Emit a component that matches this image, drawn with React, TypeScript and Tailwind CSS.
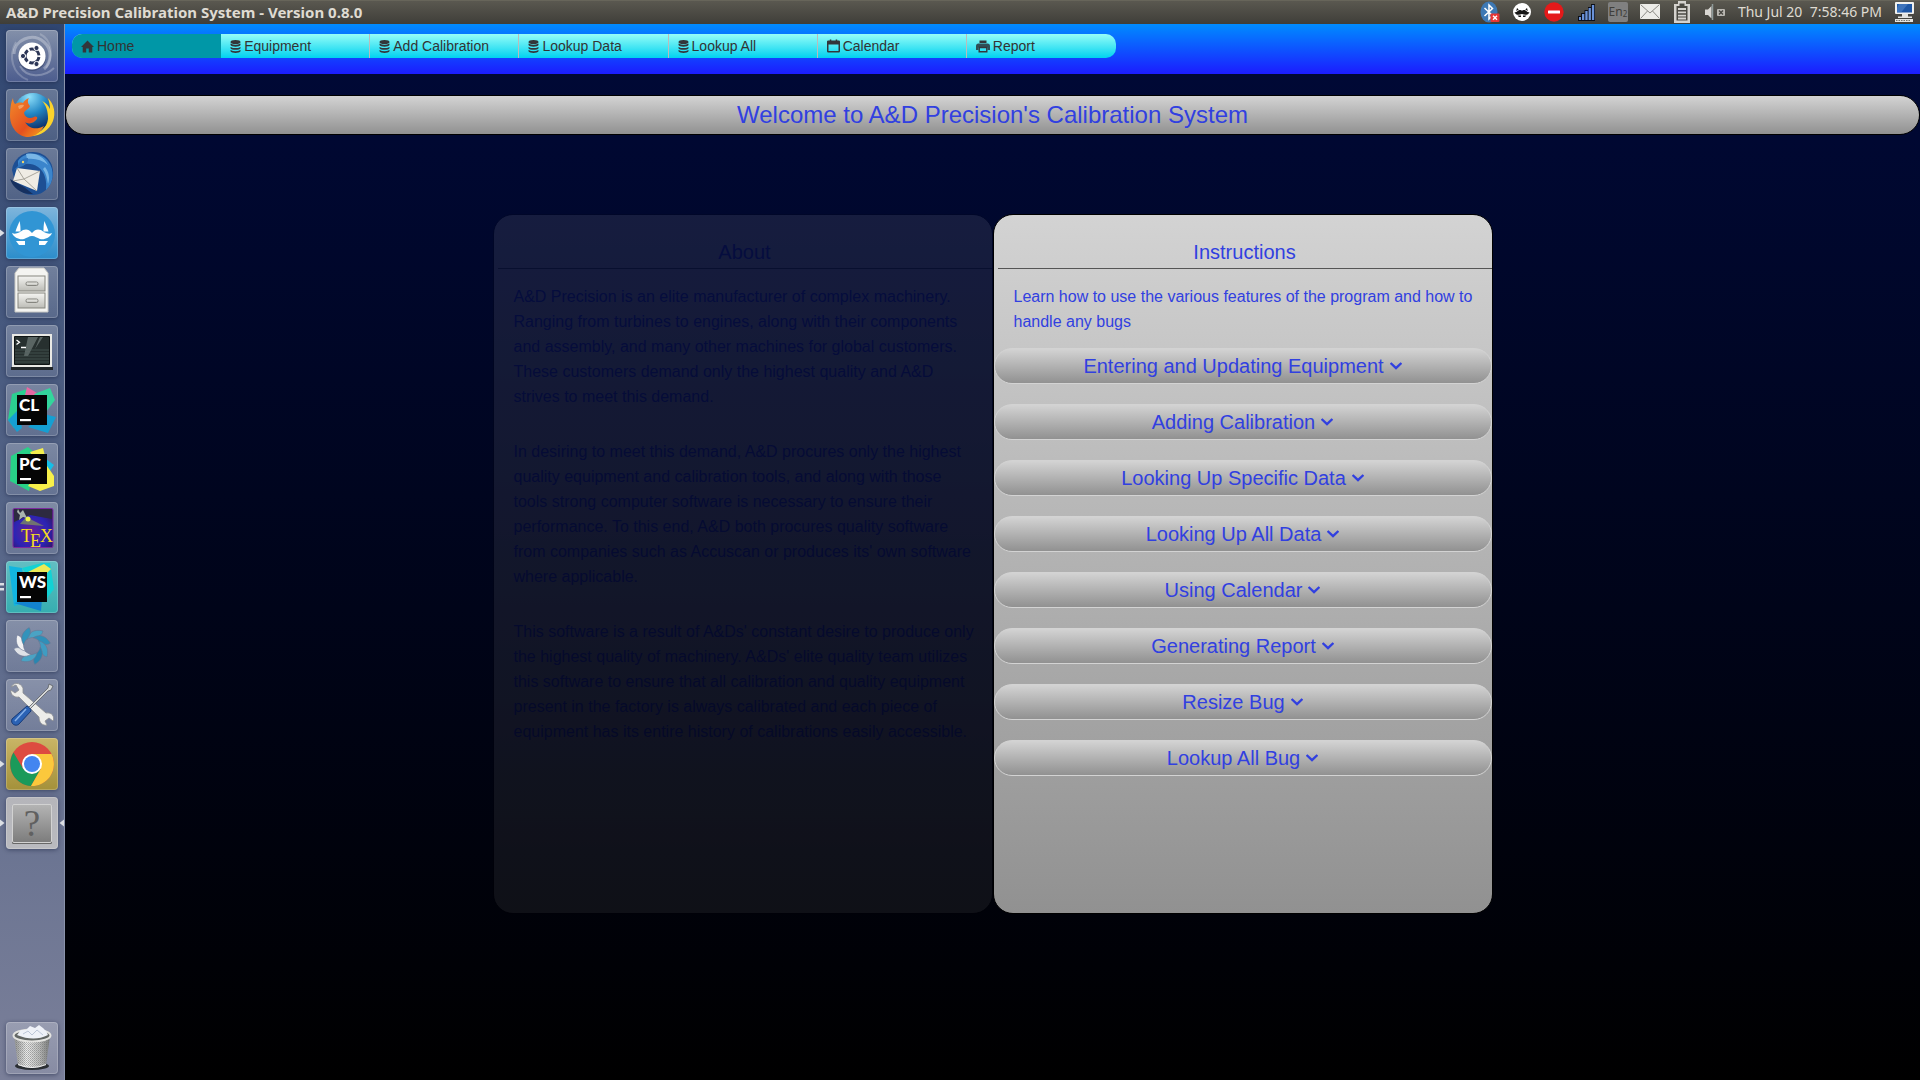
import React, { useState } from "react";

const DatabaseIcon = () => (
  <svg width="11" height="13" viewBox="0 0 11 13" fill="#33363a" aria-hidden="true">
    <ellipse cx="5.5" cy="2" rx="5" ry="2" />
    <path d="M.5 3.600q5 2.400 10 0v1.400c-.8 2.200-9.200 2.200-10 0z" />
    <path d="M.5 6.900q5 2.400 10 0v1.300c-.8 2.200-9.200 2.200-10 0z" />
    <path d="M.5 10q5 2.400 10 0v1.200c-.8 2.300-9.200 2.300-10 0z" />
  </svg>
);

const HomeIcon = () => (
  <svg width="13" height="13" viewBox="0 0 13 13" fill="#33363a" aria-hidden="true">
    <path d="M6.500.500 13 7H11.300V12.500H7.800V8.500H5.200V12.500H1.700V7H0z" />
  </svg>
);

const CalendarIcon = () => (
  <svg width="13" height="14" viewBox="0 0 13 14" aria-hidden="true">
    <rect x=".75" y="2.250" width="11.500" height="10.500" rx=".5" fill="none" stroke="#33363a" strokeWidth="1.500" />
    <path d="M.5 2h12v3.500H.5zM2.800.500h1.500V3H2.800zM8.700.500h1.500V3H8.700z" fill="#33363a" />
  </svg>
);

const PrinterIcon = () => (
  <svg width="14" height="13" viewBox="0 0 14 13" aria-hidden="true">
    <path d="M3.500.500h7V3h-7z" fill="#33363a" />
    <path d="M0 6q0-2.500 2.500-2.500h9Q14 3.500 14 6v4H11.500V7.500h-9V10H0z" fill="#2f4f57" />
    <path d="M3.200 7.500h7.600v4.300H3.200z" fill="none" stroke="#33363a" strokeWidth="1.400" />
  </svg>
);

const ChevronDown = () => (
  <svg width="12" height="8" viewBox="0 0 12 8" fill="none" stroke="currentColor" strokeWidth="2.400" aria-hidden="true">
    <path d="M.6 1 6 6.200 11.400 1" />
  </svg>
);

const navItems = [
  { label: "Home", icon: <HomeIcon /> },
  { label: "Equipment", icon: <DatabaseIcon /> },
  { label: "Add Calibration", icon: <DatabaseIcon /> },
  { label: "Lookup Data", icon: <DatabaseIcon /> },
  { label: "Lookup All", icon: <DatabaseIcon /> },
  { label: "Calendar", icon: <CalendarIcon /> },
  { label: "Report", icon: <PrinterIcon /> },
];

const topics = [
  "Entering and Updating Equipment",
  "Adding Calibration",
  "Looking Up Specific Data",
  "Looking Up All Data",
  "Using Calendar",
  "Generating Report",
  "Resize Bug",
  "Lookup All Bug",
];

const about = [
  "A&D Precision is an elite manufacturer of complex machinery. Ranging from turbines to engines, along with their components and assembly, and many other machines for global customers. These customers demand only the highest quality and A&D strives to meet this demand.",
  "In desiring to meet this demand, A&D procures only the highest quality equipment and calibration tools, and along with those tools strong computer software is necessary to ensure their performance. To this end, A&D both procures quality software from companies such as Accuscan or produces its' own software where applicable.",
  "This software is a result of A&Ds' constant desire to produce only the highest quality of machinery. A&Ds' elite quality team utilizes this software to ensure that all calibration and quality equipment present in the factory is always calibrated and each piece of equipment has its entire history of calibrations easily accessible.",
];

const Art = ({ children }: { children: React.ReactNode }) => (
  <svg className="size-full" viewBox="0 0 52 52" aria-hidden="true">
    {children}
  </svg>
);

const UbuntuArt = () => (
  <Art>
    <g fill="none" stroke="#fff">
      <path d="M8 24C8 10 26 2 38 12c8 7 8 20 0 27" strokeOpacity=".3" strokeWidth="3" />
      <path d="M10 12C2 26 6 44 22 50" strokeOpacity=".2" strokeWidth="2" />
      <path d="M14 36c6 12 24 12 34 2" strokeOpacity=".25" strokeWidth="2" />
      <path d="M34 4c12 6 14 22 6 34" strokeOpacity=".2" strokeWidth="2" />
    </g>
    <circle cx="26" cy="27" r="14" fill="#1c2747" opacity=".35" />
    <circle cx="26" cy="26" r="13.600" fill="#fff" />
    <circle cx="26" cy="26" r="7" fill="none" stroke="#2c3656" strokeWidth="3" strokeDasharray="12.660 2" strokeDashoffset="-1" />
    <g fill="#2c3656" stroke="#fff">
      <circle cx="17" cy="26" r="2.600" />
      <circle cx="30.500" cy="18" r="2.600" />
      <circle cx="30.500" cy="34" r="2.600" />
    </g>
  </Art>
);

const FirefoxArt = () => (
  <Art>
    <defs>
      <radialGradient id="globe" cx=".4" cy=".1" r=".9">
        <stop offset="0" stopColor="#8fe0fa" />
        <stop offset=".5" stopColor="#2387c4" />
        <stop offset="1" stopColor="#0c2c66" />
      </radialGradient>
      <linearGradient id="fox" x1="0" y1="0" x2="1" y2="1">
        <stop offset="0" stopColor="#f28a2a" />
        <stop offset=".6" stopColor="#e4501f" />
        <stop offset="1" stopColor="#f6a51c" />
      </linearGradient>
    </defs>
    <circle cx="27" cy="23" r="19" fill="url(#globe)" />
    <path d="M42 9c6 6 8 15 5 23-4 10-14 16-24 15 10-2 18-8 19-17 0-8-2-14-6-18 4 2 6 4 8 8 0-4-1-8-2-11z" fill="#fbd22c" />
    <path d="M7 9c0 3 1 5 2 6 2-1 5-2 8-1 1-2 3-4 6-5-2 3-1 6 1 8-1 3-5 4-6 7 1 5 6 6 10 4 2-1 4 0 3 2-3 4-8 6-12 3 4 7 12 8 19 4-4 7-10 11-16 11C12 48 4 38 4 27 4 20 5 13 7 9z" fill="url(#fox)" />
    <path d="M12 17q4-2 6-1-1 3-5 4z" fill="#fbc08a" opacity=".6" />
  </Art>
);

const ThunderbirdArt = () => (
  <Art>
    <path d="M6 22C7 12 16 4 27 4c13 0 21 11 20 23-1 11-9 20-20 20-7 0-13-3-17-9z" fill="#1d4f94" />
    <path d="M12 13C18 4 34 3 42 13c7 9 6 22-2 29 1-9-1-18-8-23-6-4-13-4-20-1z" fill="#3b85cc" />
    <path d="M20 6c9-2 18 3 22 11-6-5-13-7-21-6zM39 19c4 5 5 11 3 17-1-6-2-11-5-15z" fill="#79b6e6" />
    <path d="m11 20 23 3-3 20L7 33z" fill="#efece4" />
    <path d="m11 20 7 11 16-8M7 33l11-2 13 12" fill="none" stroke="#a9a69c" />
    <path d="M4 31c3 9 12 16 23 15l-9-7z" fill="#16305f" />
    <path d="m12 18c1-5 5-8 10-8 1 4-3 8-8 9l-6 3z" fill="#2f74bd" />
    <circle cx="17" cy="14" r="1.200" fill="#f0d46c" />
  </Art>
);

const MustacheArt = () => (
  <Art>
    <circle cx="26" cy="27" r="23" fill="#3195d4" />
    <path d="M6 26c4 2 8-1 11-3 3-1 6-1 9 3 3-4 6-4 9-3 3 2 7 5 11 3-2 5-8 7-12 6-3-1-5-3-8-3s-5 2-8 3c-4 1-10-1-12-6z" fill="#fff" />
    <path d="M13.500 14c-1 3-3 7-4 10.500l5 0c0-3 0-7-1-10.500zM38.500 14c1 3 3 7 4 10.500l-5 0c0-3 0-7 1-10.500zM10 34h9V38h-6zM42 34h-9V38h6z" fill="#fff" />
  </Art>
);

const CabinetArt = () => (
  <Art>
    <defs>
      <linearGradient id="metal" x1="0" y1="0" x2="0" y2="1">
        <stop offset="0" stopColor="#f5f5f2" />
        <stop offset="1" stopColor="#bcbcb6" />
      </linearGradient>
    </defs>
    <path d="M13 2h25l4 5v39H9V7z" fill="#f4f4f1" stroke="#c9c9c4" />
    <g fill="url(#metal)" stroke="#85857f">
      <rect x="12" y="10" width="27" height="15" />
      <rect x="12" y="27" width="27" height="15" />
      <rect x="20" y="16" width="12" height="3.500" rx="1.500" />
      <rect x="20" y="33" width="12" height="3.500" rx="1.500" />
    </g>
  </Art>
);

const TerminalArt = () => (
  <Art>
    <path d="M6 9h40v34H6z" fill="#e9e9e5" />
    <path d="M5 42h42v3H5z" fill="#22272a" />
    <path d="M8.500 11.500h35v28h-35z" fill="#27302f" stroke="#0f1414" />
    <path d="M22 12h10L22 31h-4zM34 12h3l-8 12z" fill="#7d8887" opacity=".6" />
    <path d="M9 25h34M9 28h34M9 31h34M9 34h34M9 37h34" stroke="#516361" opacity=".6" />
    <path d="m10.500 15 3 2.200-3 2.200M15 22.500h5" fill="none" stroke="#fff" strokeWidth="1.300" />
  </Art>
);

const JetBrainsArt = ({ text, children }: { text: string; children: React.ReactNode }) => (
  <Art>
    {children}
    <rect x="11" y="11" width="30" height="30" fill="#050505" />
    <text x="13" y="27" fill="#fff" fontSize="17" fontWeight="900" fontFamily="Lato, sans-serif">
      {text}
    </text>
    <rect x="14" y="35" width="11" height="2.200" fill="#fff" />
  </Art>
);

const TexArt = () => (
  <Art>
    <defs>
      <radialGradient id="tex" cx=".45" cy=".6" r=".7">
        <stop offset="0" stopColor="#6a1f94" />
        <stop offset=".6" stopColor="#2b24b4" />
        <stop offset="1" stopColor="#35145c" />
      </radialGradient>
    </defs>
    <rect x="7" y="6.500" width="40" height="39" rx="1.500" fill="url(#tex)" stroke="#7c2aa0" />
    <path d="M8 7h38v10L24 13 8 20z" fill="#2d2a40" />
    <path d="m20 15 18 9-24-2z" fill="#9ac43c" opacity=".5" />
    <path d="m12 7 2 4 3-3 4 8-4-1-4 3 1-5-3-3z" fill="#a9b3ae" />
    <circle cx="22" cy="17" r="2.500" fill="#edf24a" />
    <g fill="#f5dc1e" fontFamily="Liberation Serif, serif" fontSize="18">
      <text x="15" y="40">T</text>
      <text x="24" y="45">E</text>
      <text x="34" y="40">X</text>
    </g>
  </Art>
);

const blades = [
  { angle: 0, fill: "#4aa3c4" },
  { angle: 45, fill: "#2f8fb8" },
  { angle: 90, fill: "#3f9cc2" },
  { angle: 135, fill: "#2a86b0" },
  { angle: 180, fill: "#4aa3c4" },
  { angle: 225, fill: "#dfe2e7" },
  { angle: 270, fill: "#f0f1f3" },
  { angle: 315, fill: "#3293bb" },
];

const SwirlArt = () => (
  <Art>
    {blades.map(({ angle, fill }) => (
      <path key={angle} d="M21 19.500C22 13 28 8.500 37 11c-1 4-4 6-9 6.500-3 0-5 .5-7 2z" transform={`rotate(${angle} 26 26)`} fill={fill} stroke="#6a7692" strokeWidth=".6" />
    ))}
  </Art>
);

const ToolsArt = () => (
  <Art>
    <path d="M5 8c3-5 9-5 12 1v5l23 20c6-1 9 4 7 8l-4-3-4 3 2 4c-4 1-8-2-8-8L13 18c-5 1-9-3-8-7l4 3 4-3-3-5z" fill="#ededea" stroke="#8c8e90" strokeWidth=".8" />
    <path d="m22 29 20-20 1-4 4 2-2 4-3 1-19 19z" fill="#d5d7d8" stroke="#5b5e62" strokeWidth=".8" />
    <path d="M21 27c2 1 4 3 4 5L13 45c-3 3-9 0-7-5z" fill="#2b62b4" stroke="#173a77" />
    <path d="M20 30 9 42" stroke="#86b0e8" strokeWidth="1.500" />
  </Art>
);

const ChromeArt = () => (
  <Art>
    <circle cx="26" cy="26" r="22" fill="#dd4b40" />
    <path d="m17.300 31 8.700 5 8.700-5L25 48A22 22 0 0 1 7.500 14.500z" fill="#1b9a5a" />
    <path d="M26 16h19.500A22 22 0 0 1 25 48l9.700-17z" fill="#fbc83c" />
    <circle cx="26" cy="26" r="10" fill="#fff" />
    <circle cx="26" cy="26" r="8" fill="#4385f0" />
  </Art>
);

const UnknownArt = () => (
  <Art>
    <defs>
      <linearGradient id="unknown" x1="0" y1="0" x2="0" y2="1">
        <stop offset="0" stopColor="#b4b4b4" />
        <stop offset="1" stopColor="#7c7c7c" />
      </linearGradient>
    </defs>
    <rect x="6" y="8" width="40" height="39" rx="1.500" fill="#686868" />
    <rect x="6.500" y="7.500" width="39" height="38" rx="1.500" fill="url(#unknown)" stroke="#d2d2d2" />
    <text x="26" y="39" textAnchor="middle" fill="#606060" fontSize="37" fontFamily="Liberation Serif, serif">
      ?
    </text>
  </Art>
);

const TrashArt = () => (
  <Art>
    <defs>
      <linearGradient id="bin" x1="0" y1="0" x2="1" y2="0">
        <stop offset="0" stopColor="#8f9190" />
        <stop offset=".35" stopColor="#ecedec" />
        <stop offset=".7" stopColor="#bcbdbc" />
        <stop offset="1" stopColor="#757776" />
      </linearGradient>
      <pattern id="mesh" width="2" height="2" patternUnits="userSpaceOnUse">
        <rect width="1" height="1" fill="#666" />
        <rect x="1" y="1" width="1" height="1" fill="#888" />
      </pattern>
    </defs>
    <ellipse cx="26" cy="44" rx="17" ry="4" fill="#2a2e33" />
    <path d="M8 14 12 43q14 6 28 0l4-29z" fill="url(#bin)" />
    <path d="M9 18 12 43q14 6 28 0l3-25z" fill="url(#mesh)" opacity=".5" />
    <ellipse cx="26" cy="13.500" rx="18.500" ry="6" fill="#626664" stroke="#e3e3e0" strokeWidth="2" />
    <path d="m11 13 4-5 5 0 4-4 5 2 4-3 4 3 3 3 2 4q-14 7-31 0z" fill="#eef1f8" />
    <path d="m17 12 5-3 4 4 5-5 6 5" fill="none" stroke="#bcc6d8" />
    <path d="M12 42.500q14 6 28 0" fill="none" stroke="#eee" />
  </Art>
);

const plain = "from-white/25 to-white/10";

const launcher = [
  { name: "Search your computer", tile: "from-white/40 to-[#5c69a0]/60", art: <UbuntuArt /> },
  { name: "Firefox", tile: plain, art: <FirefoxArt /> },
  { name: "Thunderbird", tile: plain, art: <ThunderbirdArt /> },
  { name: "Franz", tile: "from-[#7fb5dc] to-[#2b8dcb]", art: <MustacheArt />, left: "arrow" },
  { name: "Files", tile: plain, art: <CabinetArt /> },
  { name: "Terminal", tile: plain, art: <TerminalArt /> },
  {
    name: "CLion",
    tile: plain,
    art: (
      <JetBrainsArt text="CL">
        <path d="M6 10 21 5l4 12L8 44 2 36z" fill="#2bcf90" />
        <path d="m21 3 10 6 2 6H18z" fill="#e567a2" />
        <path d="m28 10 16-6 5 12-9 12z" fill="#33d59c" />
        <path d="M2 36 12 26l4 18-5 4zM38 30l12 3-8 16-20-6z" fill="#159fd2" />
      </JetBrainsArt>
    ),
  },
  {
    name: "PyCharm",
    tile: plain,
    art: (
      <JetBrainsArt text="PC">
        <path d="M5 13 22 4l9 8-8 36L4 38z" fill="#28d287" />
        <path d="m24 9 13-4 3 12-8 6z" fill="#f4ee4e" />
        <path d="m36 13 12 9-6 9z" fill="#16bfe8" />
        <path d="m39 20 9 13v10l-14 5-12-5z" fill="#f8f04a" />
      </JetBrainsArt>
    ),
  },
  { name: "TeX editor", tile: plain, art: <TexArt /> },
  {
    name: "WebStorm",
    tile: "from-[#62bfc3] to-[#36aeb0]",
    left: "bars",
    art: (
      <JetBrainsArt text="WS">
        <path d="M3 5 16 7l6 34-14 4z" fill="#12b5e0" />
        <path d="m8 42 28-4-1 12z" fill="#1383d0" />
        <path d="m16 7 20-5 8 0 4 26-9 12z" fill="#12d2d4" />
        <path d="m22 11 16-8 7 5-8 8z" fill="#ecea55" />
      </JetBrainsArt>
    ),
  },
  { name: "Shutter", tile: plain, art: <SwirlArt /> },
  { name: "System settings", tile: plain, art: <ToolsArt /> },
  { name: "Chrome", tile: "from-[#c9b566] to-[#a4913a]", art: <ChromeArt />, left: "arrow" },
  { name: "Unknown application", tile: "from-[#b5b5ba] to-[#b9babf]", art: <UnknownArt />, left: "arrow", right: true },
];

type Tile = { name: string; tile: string; art: React.ReactNode; left?: string; right?: boolean };

const LauncherTile = ({ name, tile, art, left, right }: Tile) => (
  <li className="relative flex justify-center">
    {left === "arrow" && (
      <svg className="absolute top-5 left-0" width="5" height="12" viewBox="0 0 5 12" aria-hidden="true">
        <path d="M0 2.500 4.500 6 0 9.500z" fill="#dcdfe4" />
      </svg>
    )}
    {left === "bars" && (
      <svg className="absolute top-5 left-0" width="5" height="12" viewBox="0 0 5 12" aria-hidden="true">
        <path d="M0 2h4v2.500H0zM0 7h4v2.500H0z" fill="#dcdfe4" />
      </svg>
    )}
    {right && (
      <svg className="absolute top-5 right-0" width="5" height="12" viewBox="0 0 5 12" aria-hidden="true">
        <path d="M5 2.500.5 6 5 9.500z" fill="#dcdfe4" />
      </svg>
    )}
    <button
      aria-label={name}
      className={`size-[52px] overflow-hidden rounded-[4px] bg-linear-to-b/srgb shadow-[0_1px_4px_rgba(20,30,60,0.5)] ring-1 ring-white/20 ring-inset ${tile}`}
    >
      {art}
    </button>
  </li>
);

const Tray = () => (
  <div className="flex items-center gap-3">
    <svg width="20" height="22" viewBox="0 0 20 22" aria-label="Bluetooth">
      <ellipse cx="9" cy="11" rx="8.500" ry="10.500" fill="#3d78b4" />
      <path d="m4.500 7 8 7.500L9 18V4l3.500 3.500-8 7.500" fill="none" stroke="#fff" strokeWidth="1.500" />
      <rect x="10.500" y="12.500" width="9" height="8.500" rx="1" fill="#e63535" />
      <path d="m13 14.800 4 4m0-4-4 4" stroke="#fff" strokeWidth="1.400" />
    </svg>
    <svg width="20" height="20" viewBox="0 0 20 20" aria-label="Franz">
      <circle cx="10" cy="10" r="9" fill="#fff" />
      <path d="M2.500 10c2 1 3-1.500 5-2 1-.2 2 0 2.500.8.500-.8 1.500-1 2.500-.8 2 .5 3 3 5 2-1 3-4 3.500-7.500 2-3.500 1.500-6.500 1-7.500-2zM5 6l-.8 3 2.500-1.500zM15 6l.8 3-2.500-1.500zM5.500 13.500h3.500v1.500H7zM14.500 13.500H11v1.500h2z" fill="#151515" />
    </svg>
    <svg width="20" height="20" viewBox="0 0 20 20" aria-label="Do not disturb">
      <circle cx="10" cy="10" r="9.700" fill="#e41a1a" />
      <rect x="4" y="8.500" width="12" height="3" rx=".5" fill="#fff" />
    </svg>
    <svg width="20" height="20" viewBox="0 0 20 20" aria-label="Network signal">
      <rect x="2" y="14" width="17" height="5" fill="#0c0f18" />
      <path d="M5 11h14v8H5zM8.500 8H19v11H8.500zM12 5h7v14h-7zM15 2h4v17h-4z" fill="#0c0f18" />
      <path d="M3 15h2v3H3zM6 12h2.300v6H6zM9.300 9h2.300v9H9.300zM12.600 6h2.300v12h-2.300zM15.900 3h2.300v15h-2.300z" fill="#6a92d8" />
    </svg>
    <span className="flex h-5 w-5 items-center justify-center rounded-[2px] bg-[#808080] text-xs leading-none text-[#3f3e3a]">
      En<span className="pt-1 text-[8px]">2</span>
    </span>
    <svg width="20" height="16" viewBox="0 0 20 16" aria-label="Messages">
      <rect width="20" height="15" rx="1" fill="#ecebe7" />
      <path d="m1 1 9 8 9-8M1 14l6.500-7M19 14l-6.500-7" fill="none" stroke="#8a8984" />
    </svg>
    <svg width="20" height="22" viewBox="0 0 20 22" aria-label="Battery">
      <path d="M6 0h8v3h4v19H2V3h4z" fill="#d4d2ce" />
      <path d="M7.500 2.500h5v2.500h3v14.500h-11V5h3z" fill="#4a4943" />
      <path d="M6 8h8M6 11.300h8M6 14.600h8M6 17.500h8" stroke="#d4d2ce" strokeWidth="1.800" />
    </svg>
    <svg width="22" height="18" viewBox="0 0 22 18" aria-label="Sound muted">
      <path d="M1 6.500h3V12H1zM4 6.500 7.500 3v12.500L4 12z" fill="#d8d6d2" />
      <path d="M8.500 1v16" stroke="#8f9a99" strokeWidth="1.500" />
      <rect x="13" y="6" width="8" height="7" rx="1" fill="#b9b7b1" />
      <path d="m15 7.500 4 4m0-4-4 4" stroke="#45443f" strokeWidth="1.400" />
    </svg>
    <time className="text-sm leading-5 whitespace-pre text-[#dfdbd2]">Thu Jul 20  7:58:46 PM</time>
    <svg width="22" height="22" viewBox="0 0 22 22" aria-label="Session">
      <rect x="1" y="1" width="19" height="12" rx="1" fill="#f1f1ee" />
      <rect x="3" y="3" width="15" height="8.500" fill="#1e57a5" />
      <path d="m5 3 9 0-7 8.500H3V7z" fill="#5c90d2" opacity=".5" />
      <path d="M8 13h6v2.500h4v1.500H4v-1.500h4zM1 18h18v3H1z" fill="#e4e4e0" />
      <path d="M2 19.500h14" stroke="#77776f" strokeDasharray="1.500 1" />
    </svg>
  </div>
);

export default function App() {
  const [page, setPage] = useState("Home");
  return (
    <div className="flex min-h-screen flex-col bg-black font-['Liberation_Sans',Arial,sans-serif]">
      <header className="flex h-6 shrink-0 items-center justify-between border-t border-[#67655a] bg-linear-to-b/srgb from-[#5a5850] to-[#3f3e39] pr-1 pb-px pl-1.5 font-['Noto_Sans',sans-serif]">
        <span className="text-[15px] leading-5 font-bold text-[#dfdbd2]">A&amp;D Precision Calibration System - Version 0.8.0</span>
        <Tray />
      </header>

      <div className="flex flex-1">
        <aside className="flex w-[65px] shrink-0 flex-col justify-between border-r border-[#8a93ab] bg-linear-to-b/srgb from-[#304670] via-[#586789] to-[#7a7f99] py-1.5">
          <ul className="flex flex-col gap-[7px]">
            {launcher.map((t) => (
              <LauncherTile key={t.name} {...t} />
            ))}
          </ul>
          <ul>
            <LauncherTile name="Trash" tile={plain} art={<TrashArt />} />
          </ul>
        </aside>

        <div className="flex flex-1 flex-col bg-linear-to-b/srgb from-[#000938] to-black">
          <nav className="h-[50px] bg-linear-to-b/srgb from-[#008cff] to-[#1c1cff] px-[7px] pt-2.5">
            <ul className="flex h-6 w-[1044px] max-w-full overflow-hidden rounded-[10px] bg-linear-to-b/srgb from-[#96fdf7] to-[#00d2f0]">
              {navItems.map(({ label, icon }, i) => (
                <li key={label} className="flex-1">
                  <a
                    href="#"
                    onClick={() => setPage(label)}
                    aria-current={page === label ? "page" : undefined}
                    className={`flex h-6 items-center gap-[3px] pl-[9px] text-sm whitespace-nowrap text-[#333] ${page === label ? "bg-[#0097a7]" : ""} ${i > 0 && i < 6 ? "border-r border-[#bbb]" : ""}`}
                  >
                    {icon}
                    {label}
                  </a>
                </li>
              ))}
            </ul>
          </nav>

          <h1 className="mt-[21px] rounded-[20px] border border-black bg-linear-to-b/srgb from-[#d3d3d3] to-[#919191] text-center text-2xl leading-[38px] text-[#3140e0]">
            Welcome to A&amp;D Precision&apos;s Calibration System
          </h1>

          <main className="mx-auto mt-[79px] grid w-full max-w-[1000px] grid-cols-2 text-[#3140e0]">
            <section className="min-h-[700px] rounded-[20px] border border-black bg-linear-to-b/srgb from-[#d3d3d3] to-[#919191] opacity-10">
              <h2 className="ml-1 border-b border-[#555] pt-[22px] text-center text-xl leading-[31px]">About</h2>
              <div className="mt-[15px] flex flex-col gap-[30px] pr-4 pl-5 text-base leading-[25px]">
                {about.map((p) => (
                  <p key={p}>{p}</p>
                ))}
              </div>
            </section>

            <section className="min-h-[700px] rounded-[20px] border border-black bg-linear-to-b/srgb from-[#d3d3d3] to-[#919191]">
              <h2 className="ml-1 border-b border-[#555] pt-[22px] text-center text-xl leading-[31px]">Instructions</h2>
              <p className="mt-[15px] pr-4 pl-5 text-base leading-[25px]">
                Learn how to use the various features of the program and how to handle any bugs
              </p>
              <div className="mt-3.5 flex flex-col gap-5">
                {topics.map((t) => (
                  <button
                    key={t}
                    className="flex h-9 w-full items-center justify-center gap-1.5 rounded-[18px] border border-[#d3d3d3] bg-linear-to-b/srgb from-[#d3d3d3] to-[#919191] text-xl"
                  >
                    {t}
                    <ChevronDown />
                  </button>
                ))}
              </div>
            </section>
          </main>
        </div>
      </div>
    </div>
  );
}
